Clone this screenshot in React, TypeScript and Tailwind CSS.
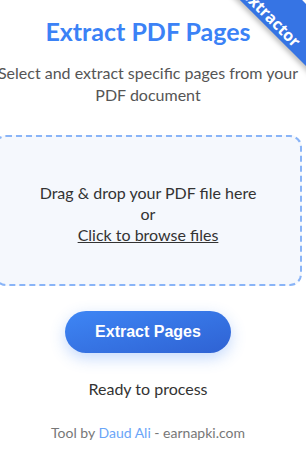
export default function App() {
  return (
    <div className="relative min-h-[458px] overflow-hidden bg-white font-['Lato','Noto_Sans',sans-serif]">
      {/* corner ribbon */}
      <div className="absolute right-0 top-0 h-[90px] w-[90px] overflow-hidden">
        <div className="absolute left-[-16px] top-[-13px] flex h-[44px] w-[160px] rotate-45 justify-center bg-[#3674e4] pt-[26px] shadow-[0_3px_5px_rgba(0,0,0,0.25)]">
          <span className="font-['Open_Sans',sans-serif] text-[16px] font-bold leading-[16px] text-white">extractor</span>
        </div>
      </div>

      <div className="ml-[-6px] flex w-[308px] flex-col items-center pt-[15px] text-center">
        <h1 className="text-[25px] font-bold leading-[32px] text-[#3b82f6]">
          Extract PDF Pages
        </h1>
        <p className="mt-[15px] text-[16px] leading-[22px] text-[#555]">
          Select and extract specific pages from your PDF document
        </p>

        {/* drop zone */}
        <div className="mt-[29px] w-full rounded-[12px] border-2 border-dashed border-[#89b4f7] bg-[#f5f8fd] pt-[45px] pb-[39px] text-[16px] leading-[21px] text-[#333]">
          <p>Drag &amp; drop your PDF file here</p>
          <p>or</p>
          <p className="underline">Click to browse files</p>
        </div>

        <button
          type="button"
          className="mt-[25px] h-[42px] w-[166px] rounded-full bg-linear-to-br from-[#3e86f5] to-[#2f62d3] font-['Liberation_Sans',Arial,sans-serif] text-[16px] font-bold text-white shadow-[0_5px_15px_rgba(59,130,246,0.3)]"
        >
          Extract Pages
        </button>

        <p className="mt-[24px] text-[16px] leading-[24px] text-[#333]">Ready to process</p>

        <p className="mt-[22px] text-[14px] leading-[20px] text-[#777]">
          Tool by <span className="text-[#6aa5f8]">Daud Ali</span> - earnapki.com
        </p>
      </div>
    </div>
  );
}
